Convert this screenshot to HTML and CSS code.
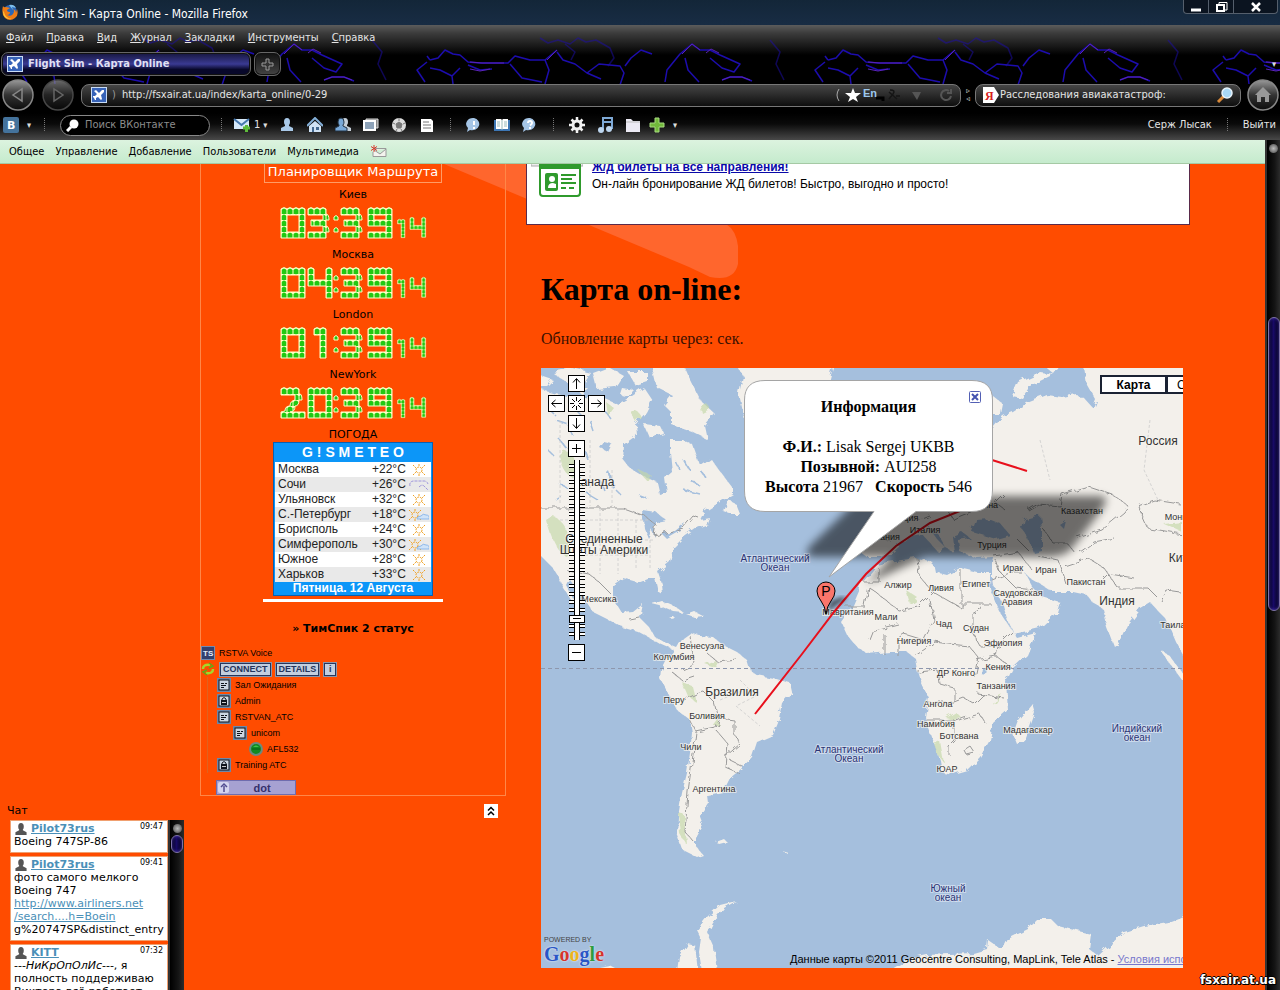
FILE: index.html
```html
<!DOCTYPE html>
<html lang="ru">
<head>
<meta charset="utf-8">
<title>Flight Sim - Карта Online - Mozilla Firefox</title>
<link rel="stylesheet" href="styles.css">
</head>
<body>
<svg class="defs" aria-hidden="true">
  <defs>
    <pattern id="brick" width="6" height="6" y="1" patternUnits="userSpaceOnUse">
      <rect width="6" height="6" fill="#ffffc4"/><path d="M.500 6V2q2.500-3 5 0V6z" fill="#22c812"/>
    </pattern>
    <g id="d0"><path d="M0 2q3-3 6 0q3-3 6 0q3-3 6 0q3-3 6 0V31H0zM6 8v17h12V8z"/></g>
    <g id="d1"><path d="M6 2q3-3 6 0q3-3 6 0V31h-6V8H6z"/></g>
    <g id="d2"><path d="M0 2q3-3 6 0q3-3 6 0q3-3 6 0V7q3-1 3 6h-3q0 6-4 6q0 6-5 6h15v6H0v-6l4-1q0-5 5-5q0-5 5-6V8H0z"/></g>
    <g id="d3"><path d="M0 2q3-3 6 0q3-3 6 0q3-3 6 0v5q3 0 3 6h-3v6q3 0 3 6h-3v6H0v-6h15v-6H3v-6h12V8H0z"/></g>
    <g id="d4"><path d="M0 2q3-3 6 0v11h12V2q3-3 6 0v29h-6V19H0z"/></g>
    <g id="d9"><path d="M0 2q3-3 6 0q3-3 6 0q3-3 6 0q3-3 6 0V31H0v-6h18v-6H0zM6 8v5h12V8z"/></g>
    <g id="colon"><path d="M1 13v-3q2-3 4 0v3zM1 25v-3q2-3 4 0v3z" fill="#22c812"/></g>
    <g id="mins"><use href="#colon" x="52"/><use href="#d3" x="60"/><use href="#d9" x="87"/><use href="#d1" transform="translate(113 12) scale(.6)"/><use href="#d4" transform="translate(129 10) scale(.65)"/></g>
    <pattern id="bolts" width="398" height="115" x="32" y="-25" patternUnits="userSpaceOnUse">
      <g fill="none" stroke="#1c0cae" stroke-width="1.500" stroke-linejoin="round">
        <path d="M0 60l8-2 7-8 8 4 7 1 8 7 12 1h28l7-7 15 4 15 0 12-10M38 65l12 5 12-1M0 68l10 2 12 6 1 8M30 68l-8 8M80 64l12 14 20 4M115 60l4 10-4 14M127 52l6 8 12 4 12 9 12-9 21 2 4 7-4 12M157 73l14 6M195 66l6-8 10-8 11 4M235 82l2-12 13-16 12-10 8 6 10 0 10 5 20 9-6 8-12-4-12-10M255 58l3 12 11 12M292 80l8-3 12 0 10 4M395 62l-10 8 8 12M398 60l-3-4"/>
        <path d="M110 38l8 5 10-3 12 4 8-6 8 4 10-2 14 8 4 10-6 8M135 44l10 8-4 8M340 40l10 12-4 12 8 16" opacity=".5"/>
      </g>
      <g fill="none" stroke="#5a22b8"><path d="M117 60l10-10M40 62l12 1h22M40 69l10 2 10-2M252 54l10-10 8 6M276 53l5-4 8 4M292 80l8-3 12 0 8 3"/></g>
    </pattern>
    <linearGradient id="silver" x2="0" y2="1"><stop stop-color="#999"/><stop offset=".5" stop-color="#333"/><stop offset="1" stop-color="#0c0c0c"/></linearGradient>
    <g id="sun" fill="none" stroke="#f0a020" stroke-dasharray="2 1"><circle cx="10" cy="7" r="3"/><path d="M4 2l3 3M16 2l-3 3M4 12l3-3M16 12l-3-3M10 1v2M10 11v2"/></g>
    <g id="suncloud"><use href="#sun" x="-4"/><path d="M8 11q0-3 4-3q2-3 5-1q4 0 3 4z" fill="#cfe3f8" stroke="#8db8ea"/></g>
    <g id="plane"><rect width="16" height="16" fill="#c9dcf5"/><rect x="1" y="1" width="14" height="14" fill="#3763b8"/><path d="M3 4l2-1 3 3 3-3h2v2l-3 3 1 4-1 1-3-3-2 1v2H4l-1-2-1-1v-1h2l2-2z" fill="#fff"/></g>
    <g id="room"><rect width="14" height="14" fill="#6d86a8"/><rect x="2" y="2" width="10" height="10" fill="#cdd6e2" stroke="#10141c"/><path d="M4 5.500h3M8 5.500h2M4 7.500h5M4 9.500h3" stroke="#10141c"/></g>
    <g id="lock"><rect width="14" height="14" fill="#6d86a8"/><rect x="2" y="2" width="10" height="10" fill="#cdd6e2" stroke="#10141c"/><path d="M5 6.500V5q2-3 4 0v1.500" fill="none" stroke="#10141c"/><rect x="4" y="6" width="6" height="5" fill="#10141c"/><path d="M5 8.500h4" stroke="#ccc"/></g>
    <g id="user"><path d="M4 5a3 4 0 1 1 6 0q0 2-1 3v1l4 2v3H1v-3l4-2V8q-1-1-1-3z"/></g>
  </defs>
</svg>

<div class="titlebar">
  <svg width="18" height="18" viewBox="0 0 18 18"><circle cx="9" cy="9" r="7" fill="#2a67b8"/><path d="M8 2q5-1 7 3l-4-1 1 3z" fill="#7ec0ee"/><path d="M2 3q1 2 3 1l4 1-3 2q0 2 3 2 0 3-3 3 4 2 6-1 2-3 0-5 3 1 3 4l1-4q2 6-2 9-5 4-10 0-4-4-2-12z" fill="#f07c14"/><path d="M3 9q1 6 8 7-9 1-9-8z" fill="#ffc83c"/></svg>
  <span class="title">Flight Sim - Карта Online - Mozilla Firefox</span>
  <div class="winbtns">
    <button aria-label="Свернуть"><svg width="12" height="12"><path d="M1 9h10" stroke="#fff" stroke-width="3"/></svg></button>
    <button aria-label="Развернуть"><svg width="13" height="12" fill="none" stroke="#fff"><path d="M4 3V1.500h8V9h-2"/><rect x="2" y="4" width="7" height="6" stroke-width="2"/></svg></button>
    <button class="wide" aria-label="Закрыть"><svg width="12" height="12"><path d="M2 2l8 8M10 2l-8 8" stroke="#fff" stroke-width="2.500"/></svg></button>
  </div>
</div>

<header class="chrome">
  <svg class="lightning" aria-hidden="true"><rect width="100%" height="60" fill="url(#bolts)"/></svg>
  <nav class="menu">
    <a href="#"><u>Ф</u>айл</a><a href="#"><u>П</u>равка</a><a href="#"><u>В</u>ид</a><a href="#"><u>Ж</u>урнал</a><a href="#"><u>З</u>акладки</a><a href="#"><u>И</u>нструменты</a><a href="#"><u>С</u>правка</a>
  </nav>
  <div class="tabs">
    <button class="tab"><svg width="16" height="16"><use href="#plane"/></svg>Flight Sim - Карта Online</button>
    <button class="newtab" aria-label="Новая вкладка"><svg width="13" height="13"><path d="M5 1h3v4h4v3H8v4H5V8H1V5h4z" fill="#333" stroke="#999"/></svg></button>
    <span class="grow"></span><span class="caret">▾</span>
  </div>
  <div class="navbar">
    <button class="round" aria-label="Назад"><svg width="34" height="34"><circle cx="17" cy="17" r="15" fill="url(#silver)" stroke="#888" stroke-width="1.500"/><path d="M21 11v12l-9-6z" fill="#333" stroke="#888" stroke-width="1.500"/></svg></button>
    <button class="round" aria-label="Вперёд"><svg width="34" height="34"><circle cx="17" cy="17" r="15" fill="url(#silver)" stroke="#666" stroke-width="1.500" opacity=".7"/><path d="M13 11v12l9-6z" fill="#222" stroke="#666" stroke-width="1.500"/></svg></button>
    <div class="field url">
      <svg width="16" height="16"><use href="#plane"/></svg><span class="sep">)</span>
      <input aria-label="Адрес" value="http://fsxair.at.ua/index/karta_online/0-29">
      <svg width="120" height="18" viewBox="0 0 120 18"><path d="M5 3q-4 6 0 12" stroke="#aaa" fill="none"/><path d="M19 2l2 5 6 0-5 4 2 5-5-3-5 3 2-5-5-4 6 0z" fill="#fff"/><path d="M42 12h7v3" stroke="#000" stroke-width="3" fill="none"/><text x="29" y="11" class="en">En</text><path d="M56 4q6 0 3 4l-4 5M55 6l8 7M62 10h4" stroke="#151515" stroke-width="1.500" fill="none"/><path d="M78 6h9l-4 8z" fill="#555"/><path d="M117 10a5 5 0 1 1-2-5M117 3v4h-4" stroke="#555" stroke-width="2" fill="none"/></svg>
    </div>
    <span class="split">▹<br>◃</span>
    <div class="field search">
      <svg width="18" height="18"><path d="M1 1h11l5 8-5 8H1z" fill="#fff"/><text x="3" y="14" class="ya">Я</text></svg>
      <input aria-label="Поиск" value="Расследования авиакатастроф:">
      <svg width="18" height="18"><path d="M2 16l6-6" stroke="#d98a3a" stroke-width="3"/><circle cx="11" cy="7" r="5" fill="#a9d8f5" stroke="#e8f4fc" stroke-width="1.500"/></svg>
    </div>
    <button class="round home" aria-label="Домой"><svg width="34" height="34"><circle cx="17" cy="17" r="15" fill="url(#silver)" stroke="#888" stroke-width="1.500"/><path d="M17 9l8 8h-2v7h-4v-5h-4v5h-4v-7H9z" fill="#999"/></svg></button>
  </div>
  <div class="bookmarks">
    <svg width="16" height="16"><rect width="16" height="16" rx="2" fill="#44739c"/><text x="4" y="12" class="vk">B</text></svg>
    <span class="caret">▾</span><i class="dots"></i>
    <label class="vksearch"><svg width="13" height="13"><path d="M1 12l4-4" stroke="#fff" stroke-width="3"/><circle cx="8" cy="5" r="4.500" fill="#fff"/></svg><input placeholder="Поиск ВКонтакте"></label>
    <i class="dots"></i>
    <span class="mail"><svg width="18" height="16"><path d="M1 2h15v10H1z" fill="#d5e9fa"/><path d="M1 2l7.500 6L16 2" stroke="#4577ad" stroke-width="2" fill="none"/><path d="M10 11h7M13.500 8v7" stroke="#5dbb3a" stroke-width="3"/></svg><b>1</b><span class="caret">▾</span></span>
    <span class="icons">
      <svg width="16" height="16" fill="#a9c9e8"><use href="#user" x="1"/></svg>
      <svg width="16" height="16"><path d="M2 9l6-5 6 5v6H2z" fill="#cfe2f5"/><path d="M0 9l8-8 8 8" stroke="#83afd8" stroke-width="2" fill="none"/><path d="M5 10h2v5H5zM9 10h3v3H9z" fill="#44688f"/></svg>
      <svg width="16" height="16"><g fill="#c6d0da"><use href="#user" x="3"/></g><g fill="#79a9d8" stroke="#234"><use href="#user" x="-1"/></g></svg>
      <svg width="16" height="16"><path d="M3 2h12v9H3z" fill="#888" stroke="#ddd"/><path d="M1 4h11v9H1z" fill="#8da2b8" stroke="#fff" stroke-width="2"/></svg>
      <svg width="16" height="16"><circle cx="8" cy="8" r="7" fill="#ddd"/><path d="M8 5l3 2-1 4H6L5 7zM8 1v3M2 6l2 1M14 6l-2 1M5 14l1-2M11 14l-1-2" fill="#777" stroke="#777"/></svg>
      <svg width="16" height="16"><path d="M2 2h10l2 2v11H2z" fill="#fff"/><path d="M4 5h6M4 8h8M4 11h8" stroke="#777"/></svg>
    </span>
    <i class="dots"></i>
    <span class="icons">
      <svg width="16" height="16"><path d="M8 1a7 6 0 1 1-4 12l-3 2 1-4A7 6 0 0 1 8 1z" fill="#a5c5e6"/><path d="M8 4v4M8 10v2" stroke="#fff" stroke-width="2"/></svg>
      <svg width="16" height="16"><path d="M0 3h16v11H0z" fill="#3d77b5"/><path d="M2 2h5l1 1 1-1h5v10H2z" fill="#fff"/><path d="M8 3v10M3 5h3M3 7h3M3 9h3M10 5h3M10 7h3M10 9h3" stroke="#9bb"/></svg>
      <svg width="16" height="16"><path d="M8 1a7 6 0 1 1-4 12l-3 2 1-4A7 6 0 0 1 8 1z" fill="#a5c5e6"/><path d="M6 6q0-2 2-2t2 2q0 1-2 2.500M8 10v2" stroke="#fff" stroke-width="2" fill="none"/></svg>
    </span>
    <i class="dots"></i>
    <span class="icons">
      <svg width="16" height="16"><circle cx="8" cy="8" r="4" fill="none" stroke="#f2f2f2" stroke-width="3"/><path d="M8 0v3M8 13v3M0 8h3M13 8h3M2.500 2.500l2 2M11.500 11.500l2 2M13.500 2.500l-2 2M2.500 13.500l2-2" stroke="#f2f2f2" stroke-width="2.500"/></svg>
      <svg width="16" height="16"><path d="M6 12V1h9v11M6 5h9" stroke="#7ea9d6" stroke-width="2" fill="none"/><circle cx="4" cy="13" r="3" fill="#bcd5ee"/><circle cx="12" cy="12" r="3" fill="#bcd5ee"/></svg>
      <svg width="16" height="16"><path d="M1 2h5l2 2h7v11H1z" fill="#eceaf4"/><path d="M1 5h14" stroke="#bbb"/></svg>
    </span>
    <svg class="plus" width="16" height="16"><path d="M6 1h4v5h5v4h-5v5H6v-5H1V6h5z" fill="#72b93c" stroke="#a8dc80"/></svg>
    <span class="caret">▾</span>
    <span class="grow"></span>
    <a href="#">Серж Лысак</a><i class="dots"></i><a href="#">Выйти</a>
  </div>
</header>

<div class="viewport">
  <div class="site">
    <nav class="admin">
      <a href="#">Общее</a><a href="#">Управление</a><a href="#">Добавление</a><a href="#">Пользователи</a><a href="#">Мультимедиа</a>
      <svg width="17" height="13"><path d="M4 3.500h12v8H3V7M4 5l6 4 6-5" fill="#f4f4ee" stroke="#999"/><path d="M4 0v7M1 1.500l6 4M7 1.500l-6 4" stroke="#d63a2c"/></svg>
    </nav>
    <div class="page">
      <svg class="swoosh" viewBox="0 0 300 116" width="300" height="116" aria-hidden="true"><path d="M0 0H95L282 60Q292 66 294 82V100Q290 118 266 113L245 103 0 0z" fill="#ff662d"/></svg>
      <aside>
        <section class="panel">
          <a class="planner" href="#">Планировщик Маршрута</a>
          <p class="city">Киев</p>
          <svg class="clock" width="145" height="36" role="img" aria-label="03:39:14"><use href="#d0"/><use href="#d3" x="27"/><use href="#mins"/></svg>
          <p class="city">Москва</p>
          <svg class="clock" width="145" height="36" role="img" aria-label="04:39:14"><use href="#d0"/><use href="#d4" x="27"/><use href="#mins"/></svg>
          <p class="city">London</p>
          <svg class="clock" width="145" height="36" role="img" aria-label="01:39:14"><use href="#d0"/><use href="#d1" x="27"/><use href="#mins"/></svg>
          <p class="city">NewYork</p>
          <svg class="clock" width="145" height="36" role="img" aria-label="20:39:14"><use href="#d2"/><use href="#d0" x="27"/><use href="#mins"/></svg>
          <p class="city">ПОГОДА</p>
          <div class="meteo">
            <h3>G ! S M E T E O</h3>
            <table>
              <tr><td>Москва</td><td>+22°C</td><td><svg width="20" height="14"><use href="#sun"/></svg></td></tr>
              <tr><td>Сочи</td><td>+26°C</td><td><svg width="20" height="14"><path d="M1 8q-1-4 3-5h11q3 0 4 3M10 9q3-3 5-1l4 4" fill="none" stroke="#9f96dc" stroke-dasharray="3 1"/></svg></td></tr>
              <tr><td>Ульяновск</td><td>+32°C</td><td><svg width="20" height="14"><use href="#sun"/></svg></td></tr>
              <tr><td>С.-Петербург</td><td>+18°C</td><td><svg width="20" height="14"><use href="#suncloud"/></svg></td></tr>
              <tr><td>Борисполь</td><td>+24°C</td><td><svg width="20" height="14"><use href="#sun"/></svg></td></tr>
              <tr><td>Симферополь</td><td>+30°C</td><td><svg width="20" height="14"><use href="#suncloud"/></svg></td></tr>
              <tr><td>Южное</td><td>+28°C</td><td><svg width="20" height="14"><use href="#sun"/></svg></td></tr>
              <tr><td>Харьков</td><td>+33°C</td><td><svg width="20" height="14"><use href="#sun"/></svg></td></tr>
            </table>
            <p>Пятница. 12 Августа</p>
          </div>
          <hr>
          <h4>» ТимСпик 2 статус</h4>
          <div class="ts">
            <div class="row"><svg width="14" height="14"><rect width="14" height="14" fill="#7189b0"/><rect x="1" y="1" width="12" height="12" fill="#34406c"/><text x="2" y="10" class="tstxt">TS</text></svg>RSTVA Voice</div>
            <div class="row btns"><svg width="14" height="14" fill="none" stroke="#a4d82a" stroke-width="2.500"><path d="M2 7q0-5 7-4M12 7q0 5-7 4"/><path d="M8 1l4 3-4 2M6 13l-4-3 4-2" stroke="#62a818" stroke-width="1.500"/></svg><button>CONNECT</button><button>DETAILS</button><button>i</button></div>
            <div class="tree">
              <div class="row"><svg width="14" height="14"><use href="#room"/></svg>Зал Ожидания</div>
              <div class="row"><svg width="14" height="14"><use href="#lock"/></svg>Admin</div>
              <div class="row"><svg width="14" height="14"><use href="#room"/></svg>RSTVAN_ATC</div>
              <div class="row in1"><svg width="14" height="14"><use href="#room"/></svg>unicom</div>
              <div class="row in2"><svg width="14" height="14"><circle cx="7" cy="7" r="6" fill="#118a22" stroke="#6a8a80" stroke-width="2"/><path d="M3 7h8" stroke="#0a5c14"/><path d="M4 5q3-3 6 0z" fill="#42c24c"/></svg>AFL532</div>
              <div class="row"><svg width="14" height="14"><use href="#lock"/></svg>Training ATC</div>
            </div>
            <button class="dot"><svg width="11" height="11"><rect width="11" height="11" rx="2" fill="#d4d4ee"/><path d="M6 10V4M3 5l3-3 3 3" fill="none" stroke="#514c90" stroke-width="1.500"/></svg><span>dot</span></button>
          </div>
        </section>
        <div class="chathead"><span>Чат</span><button aria-label="Наверх"><svg width="14" height="14" fill="none" stroke="#000" stroke-width="1.500"><path d="M4 6.500l3-3 3 3M4 11l3-3 3 3"/></svg></button></div>
        <div class="chat">
          <ul>
            <li><div class="who"><svg width="14" height="13" viewBox="0 0 14 14" fill="#555"><use href="#user"/></svg><a href="#">Pilot73rus</a><time>09:47</time></div>Boeing 747SP-86</li>
            <li><div class="who"><svg width="14" height="13" viewBox="0 0 14 14" fill="#555"><use href="#user"/></svg><a href="#">Pilot73rus</a><time>09:41</time></div>фото самого мелкого<br>Boeing 747<br><a href="#">http://www.airliners.net<br>/search....h=Boein</a><br>g%20747SP&amp;distinct_entry</li>
            <li><div class="who"><svg width="14" height="13" viewBox="0 0 14 14" fill="#555"><use href="#user"/></svg><a href="#">KITT</a><time>07:32</time></div>---<em>НиКрОпОлИс</em>---, я<br>полность поддерживаю<br>Виктора всё работает</li>
          </ul>
          <div class="bar small"><i class="knob"></i><i class="thumb"></i></div>
        </div>
      </aside>

      <main>
        <div class="ad">
          <svg width="52" height="38"><path d="M0 4h52v3H0z" fill="#eee" stroke="#aaa"/><path d="M9 5h40v29q0 3-3 3H12q-3 0-3-3z" fill="#fff" stroke="#2f9a2c" stroke-width="2"/><path d="M9 4h40v6H9z" fill="#2f9a2c"/><rect x="14" y="14" width="13" height="18" rx="2" fill="#2f9a2c"/><circle cx="21" cy="20" r="3" fill="#fff"/><path d="M17 29q0-5 5-5l3 1v4z" fill="#fff"/><path d="M30 16h15M30 20h11M30 24h15M30 29h5M38 29h5" stroke="#2f9a2c" stroke-width="2"/></svg>
          <div><a href="#">Ж/д билеты на все направления!</a><p>Он-лайн бронирование ЖД билетов! Быстро, выгодно и просто!</p></div>
        </div>
        <div class="content">
        <h1>Карта on-line:</h1>
        <p class="upd">Обновление карты через: сек.</p>
        <div class="map">
          <svg class="world" viewBox="541 368 642 600" preserveAspectRatio="xMinYMin slice">
            <defs><filter id="blur" x="-20%" y="-50%" width="140%" height="200%"><feGaussianBlur stdDeviation="4"/></filter>
            <filter id="soft"><feGaussianBlur stdDeviation="2"/></filter>
            <filter id="rough" x="0" y="0" width="100%" height="100%"><feTurbulence type="fractalNoise" baseFrequency=".12" numOctaves="3" seed="4"/><feDisplacementMap in="SourceGraphic" scale="7"/></filter></defs>
            <rect x="541" y="368" width="642" height="600" fill="#a5bfdd"/>
            <g fill="#f3f0eb" filter="url(#rough)">
              <path d="M535 388L556 394 578 398 600 396 618 404 632 396 644 388 652 400 646 412 636 424 637 435 623 445 622 458 630 468 647 478 657 482 660 495 667 493 665 478 672 472 670 452 670 440 683 440 693 445 700 465 710 458 723 475 733 488 733 494 720 502 704 512 700 520 710 518 708 524 697 528 683 538 673 548 670 562 658 572 662 584 663 595 658 592 655 578 647 578 637 582 623 578 613 585 613 598 622 613 633 612 643 604 640 618 650 628 655 637 665 643 677 648 683 638 690 633 700 636 713 637 723 645 737 652 747 660 750 670 757 675 773 678 790 683 792 692 782 703 778 723 773 735 757 742 752 757 740 770 730 778 723 792 707 795 708 803 700 815 703 823 695 837 695 845 703 855 697 857 683 850 677 833 678 817 682 793 687 773 690 753 692 733 690 720 677 710 670 697 661 680 662 670 668 658 674 650 660 644 650 638 637 631 620 626 607 619 593 612 582 596 570 580 567 586 577 604 573 602 563 588 558 576 553 568 541 556 535 550z"/>
              <path d="M552 372l20-4 18 4-8 12-16-2zM594 374l16-6 14 8-8 12-18 2zM628 372l20 0 0 10-12 4zM650 362h32l6 14 12 24 15 14-10 12 3 14-16-8-20-7 0-12-8-8 8-10-16-8zM644 424l16 2 4 8-14 4zM570 386l18 2-6 6zM541 376l12 4-6 6-8 0zM622 388l12 2-6 6-8-2zM735 360h100l-6 22-12 30-24 60-20-8-26-34-8-36 4-18z"/>
              <path d="M724 512l4-12 8 4 4 10-10 0zM652 604l10-3 14 6 8 6-10-1-14-6zM686 614l8-3 10 5-10 1zM668 616l6 0-2 2zM716 842l8-3 3 3-8 2zM782 851l7 2 0 2zM887 972l20-12 20-5 46-2 14-4 1-9 10 7 6 0 4-8 20-10 10-10 13 0 7 7 20 5 13 3-2 15 9 7 13-12 13-12 20-6 24-4 20-8v58zM736 901l-16 4-13 12-10 13 4 8-2 14 3 20h16l-3-22-8-18 5-10 12-14zM677 972l2-16 8-13 8 2 3 27zM600 968l10-2 8 4z"/>
              <path d="M863 582L877 565 887 562 917 558 933 562 935 572 947 575 960 568 977 572 990 572 990 588 1000 612 1013 632 1017 638 1036 633 1027 655 1013 668 1006 682 1008 710 993 723 990 740 980 757 967 770 953 774 942 772 940 760 933 740 925 717 928 697 920 680 917 670 915 658 907 652 890 652 867 654 858 648 847 635 841 622 853 605z"/>
              <path d="M1032 703l3 10-10 28-8 3-4-10 5-14zM1160 650l8 4 20 26-6 0z"/>
              <path d="M867 557L860 552 863 530 880 528 878 514 892 505 900 490 930 470 960 440 993 428 1003 416 1013 412 1027 403 1047 395 1062 397 1076 394 1084 398 1093 408 1096 400 1088 386 1084 362H1190V668L1176 642 1170 628 1165 618 1158 611 1150 602 1140 608 1127 625 1119 642 1114 646 1107 628 1102 608 1093 603 1087 595 1073 592 1053 592 1042 585 1030 578 1025 573 1033 588 1042 597 1060 602 1057 612 1040 628 1014 634 1008 622 1003 605 993 585 992 578 992 562 993 557 977 558 960 552 958 540 970 538 962 532 952 536 954 552 946 548 938 534 926 524 936 538 946 548 938 552 922 534 910 536 900 544 890 553 880 557zM868 508l10-18 8 4 4 14-12 4zM993 396l10 8-2 10-12 0zM1012 396l6-14 22-10 14 2-24 12-8 12zM1040 362l14 12 6-8z"/>
            </g>
            <g fill="#a5bfdd" filter="url(#rough)"><path d="M972 532l4-12 14-1 10 4 10 12-14 4zM1025 519l15-4 2 14 0 22-8 2-6-16-6-8zM642 510l14 2 10 8-10 2 0 16-4-8-4 8-4-10zM662 534l12-4 10-8-4 8-14 8zM982 668l5 0-1 7-5-1zM1060 525l6-4-2 8zM600 448l4-6 8 2-4 8zM608 474l4 14 3-2-5-14z"/>
            <path d="M570 430l3 6M556 420l12 4M590 420l4 12M584 450l3 9M600 480l4 10M560 440l6 8M606 412l6 8M576 410l8 8M588 494l10 6M560 484l6 3M690 480l10 6M700 470l6 8M684 460l6 10M684 490l16 4M550 410l6 6M594 404l4 6M548 450l6 6M616 490l6 6M640 496l8 3M676 462l4 8M556 500l6-4" stroke="#a5bfdd" stroke-width="1.500"/></g>
            <path d="M560 455q10-10 16 8 10 14-2 16-12-6-14-24zM546 520q12-10 22 14 4 20 0 24-16-10-22-38zM630 412q8-4 12 6l-6 4zM700 405q6-6 10 4l-8 4zM606 402l8 6-6 8zM636 468l16 8-4 6zM678 812l6 2 2 30-6-10zM705 664l10-4 2 8zM682 682l10 4 4 16-8-6zM934 744l6-3 4 22-6-8zM946 718l10-6 6 6-8 2zM906 590l12 8-8 6zM1002 694l-6 4-2 8zM1164 524l18-2v10zM712 726l6-8 1 8z" fill="#c5d9a8" opacity=".65" filter="url(#rough)"/>
            <g fill="none" stroke="#999" filter="url(#rough)">
              <path d="M541 508h82l22 8 12 10-2 10 14-4 14-4 10-12 6 2M567 570l22 4 10 8 10 10M630 620l10-2M690 636l2 14 4 14-14 6M672 672l10 8 12-4M684 700l12-6 8-2 10 10 4 16M690 720l6 12-4 30-4 30-3 40 9 10M696 732l20-4 4-10 14 2 0 14 6 10-14 12M716 730l12 14-2 24 14 6M708 654l10 8 20-2M730 760l12 6"/>
              <path d="M863 582h16v-14M844 606h20l4-20 30 24 20-4 14-14M917 558l2 18 14 16 28 16 0-38M961 604h30M1012 632l-14 14-18 0-8-14 0-18 10-6M930 600l4 20-10 20-20-6-6 4 0 18M870 640l4-10 24-6M884 654v-20M915 656l20-14 14 2 20 2 10 12-4 20M918 672l20-2 2 14 14 4 0 14-26 0M954 702l10-4 10 6 10-10M926 720l28 0 0 20-6 6 0 8M954 722l10-4 16-4 6 10M976 660l20-4 16 12M996 658l2-12M978 694l26 4M964 750l6-4 4 6-8 2z"/>
              <path d="M992 580l20-8 10 0M996 560l4 12 16 16 18 2M994 556l24-4 14 18M1018 540l10 10M1038 556l20 4 8 24M1028 510l10-6 22 2 2-12 26-8 24 8 16 12-4 6-22 18-24 8M1138 506l16-6 26 4M1138 506l10 22 34 6M1064 566l24-8 16 10 14 20 30 0 10 10M1102 582l8-8 24 4M1160 600l6-10 14 2M940 500l14 20 20-8M1005 510l-10-8 8-8M900 510l20 10 10-4M890 540l-20-6M1044 530l10 14 14 0 8 10M1080 552l14-10 20-4"/>
            </g>
            <g fill="none" stroke="#ccc" stroke-width=".8" stroke-dasharray="3 2"><path d="M560 520h90M565 540h90M570 555h80M580 508v60M600 508v66M618 508v66M636 520v50M650 540v30M740 680l16 16-20 10 24 20M560 420v84M590 440v66M612 470v36M720 700l24-10M1040 440l10 40M1150 420l-6 50 14 30"/></g>
            <path d="M541 668.500H1183" stroke="#8e97ad" stroke-dasharray="4 3"/>
            <g class="lbl" text-anchor="middle">
              <text x="599" y="602">Мексика</text><text x="702" y="649">Венесуэла</text><text x="674" y="660">Колумбия</text><text x="674" y="703">Перу</text><text x="707" y="719">Боливия</text><text x="691" y="750">Чили</text><text x="714" y="792">Аргентина</text>
              <text x="848" y="615">Мавритания</text><text x="886" y="620">Мали</text><text x="898" y="588">Алжир</text><text x="941" y="591">Ливия</text><text x="976" y="587">Египет</text><text x="944" y="627">Чад</text><text x="976" y="631">Судан</text><text x="914" y="644">Нигерия</text><text x="1003" y="646">Эфиопия</text><text x="998" y="670">Кения</text><text x="956" y="676">ДР Конго</text><text x="996" y="689">Танзания</text><text x="938" y="707">Ангола</text><text x="936" y="727">Намибия</text><text x="959" y="739">Ботсвана</text><text x="1028" y="733">Мадагаскар</text><text x="947" y="772">ЮАР</text>
              <text x="1018" y="596">Саудовская</text><text x="1017" y="605">Аравия</text><text x="1013" y="571">Ирак</text><text x="1046" y="573">Иран</text><text x="1086" y="585">Пакистан</text><text x="992" y="548">Турция</text><text x="925" y="533">Италия</text><text x="900" y="521">Франция</text><text x="882" y="540">Испания</text><text x="981" y="508">Украина</text><text x="1082" y="514">Казахстан</text><text x="1185" y="520">Монголия</text><text x="1178" y="628">Таиланд</text>
              <g class="big"><text x="594" y="486">Канада</text><text x="604" y="543">Соединенные</text><text x="604" y="554">Штаты Америки</text><text x="732" y="696">Бразилия</text><text x="1158" y="445">Россия</text><text x="1117" y="605">Индия</text><text x="1185" y="562">Китай</text></g>
              <g class="sea"><text x="775" y="562">Атлантический</text><text x="775" y="571">Океан</text><text x="849" y="753">Атлантический</text><text x="849" y="762">Океан</text><text x="1137" y="732">Индийский</text><text x="1137" y="741">океан</text><text x="948" y="892">Южный</text><text x="948" y="901">океан</text></g>
            </g>
            <path d="M755 714L802 654 834 612 866 574 896 546 930 523 965 509 980 470 960 450 992 460 1027 471" fill="none" stroke="#e8101c" stroke-width="2"/>
            <g fill="#000" opacity=".55"><path d="M862 496H1100Q1112 496 1100 512L1074 546Q1066 557 1050 557H925L866 584 892 557H815Q800 557 812 544z" filter="url(#blur)"/><path d="M827 612l20-14-6-1-10 4z" filter="url(#soft)"/></g>
            <path d="M765 380.500H972Q992.500 380.500 992.500 400V490Q992.500 511.500 972 511.500H916L829 577 874 511.500H765Q744.500 511.500 744.500 491V400Q744.500 380.500 765 380.500z" fill="#fff" stroke="#a5a5a5"/>
            <path d="M826 614q-1-8-5-13-4-5-4-10a9 9 0 0 1 18 0q0 5-4 10-4 5-5 13z" fill="#f9756b" stroke="#000"/><text x="826" y="596" text-anchor="middle" class="pin">P</text>
          </svg>
          <div class="controls">
            <div class="pan">
              <button class="n" aria-label="Вверх"><svg width="15" height="15"><path d="M7.500 13V3M4 6.500l3.500-4L11 6.500"/></svg></button>
              <button class="w" aria-label="Влево"><svg width="15" height="15"><path d="M13 7.500H3M6.500 4l-4 3.500 4 3.500"/></svg></button>
              <button aria-label="Центр"><svg width="15" height="15"><path d="M7.500 1v4M7.500 10v4M1 7.500h4M10 7.500h4M3 3l3 3M12 3L9 6M3 12l3-3M12 12L9 9"/></svg></button>
              <button aria-label="Вправо"><svg width="15" height="15"><path d="M2 7.500h10M8.500 4l4 3.500-4 3.500"/></svg></button>
              <button class="s" aria-label="Вниз"><svg width="15" height="15"><path d="M7.500 2v10M4 8.500l3.500 4 3.500-4"/></svg></button>
            </div>
            <button aria-label="Приблизить"><svg width="15" height="15"><path d="M3 7.500h9M7.500 3v9"/></svg></button>
            <input type="range" aria-label="Масштаб" min="0" max="100" value="90">
            <button aria-label="Отдалить"><svg width="15" height="15"><path d="M3 7.500h9"/></svg></button>
          </div>
          <div class="info">
            <button aria-label="Закрыть"><svg width="12" height="12"><rect x=".5" y=".5" width="11" height="11" rx="1" fill="#fff" stroke="#5360b4"/><path d="M3 3l6 6M9 3l-6 6" stroke="#4453b0" stroke-width="2"/></svg></button>
            <p><b>Информация</b></p><br>
            <p><b>Ф.И.:</b> Lisak Sergej UKBB</p>
            <p><b>Позывной:</b> AUI258</p>
            <p><b>Высота</b> 21967 &nbsp; <b>Скорость</b> 546</p>
          </div>
          <div class="types"><button class="on">Карта</button><button>Спутник</button></div>
          <div class="google"><small>POWERED BY</small><span><i class="b">G</i><i class="r">o</i><i class="y">o</i><i class="b">g</i><i class="g">l</i><i class="r">e</i></span></div>
          <p class="attr">Данные карты ©2011 Geocentre Consulting, MapLink, Tele Atlas - <a href="#">Условия использования</a></p>
        </div>
        </div>
      </main>
    </div>
  </div>
  <div class="bar"><i class="knob"></i><i class="thumb"></i></div>
</div>
<div class="mark">fsxair.at.ua</div>
</body>
</html>
```
FILE: styles.css
```css
* { box-sizing: border-box; margin: 0; padding: 0; }
body { display: flex; flex-direction: column; height: 100vh; overflow: hidden; background: #ff4c00; font: 11px/14px "DejaVu Sans Condensed", "DejaVu Sans", sans-serif; color: #000; }
button, input { font: inherit; color: inherit; border: 0; background: none; }
svg { display: block; flex: none; }
i { font-style: normal; }
ul { list-style: none; }
.defs { position: absolute; width: 0; height: 0; }
.grow { flex: 1; }
.caret { color: #ddd; font-size: 9px; }

.titlebar { display: flex; flex: none; height: 25px; padding: 2px 2px 0 1px; background: linear-gradient(#132638, #182c44); color: #fff; }
.title { flex: 1; padding: 5px 0 0 5px; font-size: 12px; }
.titlebar > svg { margin-top: 1px; }
.winbtns { display: flex; height: 14px; margin-top: -2px; border: 1px solid #555f6c; border-top: 0; border-radius: 0 0 4px 4px; background: #0b1420; }
.winbtns button { display: flex; align-items: center; justify-content: center; width: 25px; border-right: 1px solid #555f6c; }
.winbtns .wide { width: 43px; border: 0; }

.chrome { position: relative; flex: none; background: linear-gradient(#5c5c5c 0, #3c3c3c 8px, #000 30px); color: #e4e4e4; }
.lightning { position: absolute; top: 0; left: 0; width: 100%; height: 60px; filter: blur(.6px); }
.menu, .tabs, .navbar, .bookmarks { position: relative; display: flex; align-items: center; }
.chrome a, .admin a { color: inherit; text-decoration: none; }
.menu { height: 26px; gap: 13px; padding-left: 6px; }
.tabs { height: 26px; gap: 3px; padding: 0 4px 0 1px; }
.tab, .newtab { display: flex; align-items: center; gap: 5px; height: 24px; border: 1px solid #666; border-radius: 7px; box-shadow: inset 0 0 0 1px #111; }
.tab { width: 250px; padding-left: 5px; background: linear-gradient(#16163e, #3a3a92 50%, #08082a 75%); font-weight: bold; color: #e0e0f4; }
.newtab { width: 27px; justify-content: center; background: linear-gradient(#111, #444); }
.navbar { height: 36px; padding: 0 0 0 1px; }
.round { display: block; margin-right: 6px; }
.home { margin: 0 0 0 5px; }
.field { display: flex; align-items: center; height: 23px; padding: 0 6px 0 9px; border: 1px solid #777; border-radius: 8px; background: linear-gradient(#454545, #0e0e0e); }
.field input { flex: 1; min-width: 0; }
.url { flex: 1; min-width: 0; }
.url .sep { padding: 0 6px 0 5px; color: #999; }
.search { width: 266px; padding-left: 6px; }
.split { width: 14px; font-size: 8px; line-height: 8px; text-align: center; }
.en { font: bold 11px "Liberation Sans", sans-serif; fill: #9cc8ee; }
.ya { font: bold 12px "Liberation Serif", serif; fill: #d8201c; }
.vk { font: bold 11px "DejaVu Sans", sans-serif; fill: #fff; }
.bookmarks { height: 27px; padding: 0 4px 3px 3px; background: linear-gradient(#000, #0a0a0a 40%, #484848); }
.bookmarks > .caret { width: 20px; text-align: center; }
.dots { width: 1px; height: 14px; margin: 0 15px; background: repeating-linear-gradient(#777 0 1px, transparent 1px 2px); }
.bookmarks > .caret + .dots { margin-left: 5px; }
.vksearch { display: flex; align-items: center; gap: 6px; width: 150px; height: 21px; padding-left: 5px; border: 1px solid #888; border-radius: 11px; background: #000; }
.vksearch input { width: 110px; }
.vksearch input::placeholder { color: #8d8d8d; opacity: 1; }
.vksearch + .dots { margin: 0 11px; }
.mail { display: flex; align-items: center; gap: 3px; width: 46px; }
.mail b { font-weight: normal; }
.icons { display: flex; gap: 12px; }
.plus { margin-left: 8px; }

.viewport { display: flex; flex: 1; min-height: 0; }
.site { display: flex; flex: 1; flex-direction: column; min-width: 0; }
.admin { display: flex; flex: none; align-items: center; gap: 11px; height: 24px; padding-left: 9px; border-bottom: 1px solid #a5c9a4; background: linear-gradient(#dcf3df, #c5ebcd); }
.page { position: relative; display: flex; flex: 1; gap: 20px; min-height: 0; padding-right: 75px; overflow: hidden; }
.swoosh { position: absolute; left: 444px; top: 0; }
aside { position: relative; width: 506px; flex: none; font-family: "DejaVu Sans", sans-serif; font-size: 11px; line-height: 13px; }
.panel { display: flex; flex-direction: column; align-items: center; margin-left: 200px; border: 1px solid #ff8748; border-top: 0; }
.planner { padding: 0 3px 2px; border: 1px solid #ff9c66; border-top: 0; font-size: 13px; line-height: 16px; color: #fff; text-decoration: none; }
.city { margin-top: 5px; line-height: 14px; }
.clock { margin-top: 5px; fill: url(#brick); stroke: #ffffc4; stroke-width: 1px; overflow: visible; }
.meteo { width: 160px; padding: 0 1px; border: 1px solid #0b5fb0; background: #0c96f8; font-family: "Liberation Sans", sans-serif; }
.meteo h3 { font-size: 14px; line-height: 19px; text-align: center; color: #fff; }
.meteo table { width: 100%; border-collapse: collapse; background: #fff; color: #222; font-size: 12px; line-height: 15px; }
.meteo tr:nth-child(even) { background: #e9e9e9; }
.meteo td { height: 15px; padding-left: 3px; white-space: nowrap; }
.meteo td:nth-child(2) { text-align: right; }
.meteo p { font-size: 12px; line-height: 13px; font-weight: bold; text-align: center; color: #fff; }
hr { width: 180px; height: 3px; margin-top: 3px; border: 0; background: #fff; }
h4 { margin: 20px 0 9px; font-size: 11px; line-height: 14px; }
.ts { align-self: stretch; font: 9px/16px "Liberation Sans", sans-serif; }
.tstxt { font: bold 8px "Liberation Sans", sans-serif; fill: #e4ebf6; }
.row { display: flex; align-items: center; gap: 4px; height: 16px; }
.btns { gap: 5px; }
.row button { height: 13px; padding: 0 2px; border: 1px solid #26365c; outline: 1px solid #8a96ac; background: #c3cede; color: #24345c; font-weight: bold; font-size: 9px; line-height: 11px; }
.row button:last-child { width: 12px; }
.tree { margin-left: 6px; padding-left: 9px; border-left: 1px solid #e0621e; }
.in1 { padding-left: 16px; }
.in2 { padding-left: 32px; }
.dot { display: flex; align-items: center; width: 80px; height: 15px; margin: 7px 0 0 15px; padding-left: 1px; border: 1px solid #6f6cae; background: #a6a1d2; color: #35306c; font: bold 11px/12px "Liberation Sans", sans-serif; }
.dot span { flex: 1; padding-right: 0; text-align: center; }
.chathead { display: flex; justify-content: space-between; height: 24px; padding: 8px 8px 0 7px; }
.chathead button { width: 14px; height: 14px; background: #fff; }
.chat { display: flex; width: 184px; height: 180px; padding-left: 10px; }
.chat ul { flex: 1; min-width: 0; }
.chat li { margin-bottom: 3px; padding: 1px 0 4px 3px; border: 1px solid #f0a070; background: #fff; white-space: nowrap; }
.chat a { color: #4a90b8; }
.who { display: flex; gap: 3px; padding-right: 4px; }
.who a { flex: 1; font-weight: bold; }
.who time { font-size: 8px; line-height: 10px; }
.bar { position: relative; display: flex; flex: none; flex-direction: column; align-items: center; width: 15px; border-left: 2px solid #333; background: linear-gradient(90deg, #000, #151515 60%, #2c2c2c); }
.knob { width: 9px; height: 9px; margin-top: 4px; border-radius: 50%; background: radial-gradient(#bbb, #444); }
.thumb { width: 12px; height: 294px; margin-top: 164px; border: 1px solid #7d72a8; border-radius: 6px; background: linear-gradient(90deg, #05051c, #180a66 45%, #04041a); box-shadow: inset 0 0 3px #4b32b4; }
.small .thumb { height: 18px; margin-top: 2px; }
.small { width: 16px; }

main { position: relative; flex: 1; min-width: 0; }
.ad { display: flex; gap: 9px; height: 67px; margin-top: -6px; padding-left: 4px; border: 1px solid #5a2a4a; background: #fff; font: 12px/17px "Liberation Sans", sans-serif; }
.ad a { color: #0a0aa8; font-weight: bold; }
.ad > div { white-space: nowrap; }
.content { padding: 46px 7px 0 15px; font-family: "Liberation Serif", serif; }
h1 { font-size: 32px; line-height: 36px; }
.upd { margin: 22px 0 19px; font-size: 16px; line-height: 20px; color: #3a1000; }
.map { position: relative; height: 600px; overflow: hidden; background: #a5bfdd; font-family: "Liberation Sans", sans-serif; }
.world { width: 100%; height: 100%; }
.lbl { font: 9px "Liberation Sans", sans-serif; fill: #333; stroke: #f6f4ef; stroke-width: 2px; stroke-opacity: .7; paint-order: stroke; }
.lbl .big { font-size: 12px; }
.lbl .sea { font-size: 10px; fill: #2b3474; stroke: #dde6f3; }
.pin { font: 14px "Liberation Sans", sans-serif; }
.controls { position: absolute; left: 7px; top: 7px; display: flex; flex-direction: column; align-items: center; }
.controls svg { fill: none; stroke: #000; }
.controls button { width: 17px; height: 17px; border: 1px solid #000; background: #fff; }
.pan { display: grid; grid-template-columns: repeat(3, 17px); gap: 3px; margin-bottom: 8px; }
.n, .s { grid-column: 2; }
.w { grid-column: 1; }
.controls input { appearance: none; writing-mode: vertical-lr; width: 16px; height: 180px; margin: 3px 0 4px; background: linear-gradient(90deg, #000 1px, #fff 1px 5px, #000 5px) center / 6px 100% no-repeat, repeating-linear-gradient(transparent 0 4px, #000 4px 5px, #fff 5px 7px, #000 7px 8px); }
.controls input::-webkit-slider-thumb { appearance: none; width: 16px; height: 8px; border: 1px solid #000; background: linear-gradient(90deg, transparent 3px, #000 3px 11px, transparent 11px) center / 100% 1px no-repeat, #fff; }
.info { position: absolute; left: 204px; top: 12px; width: 247px; padding-top: 17px; font: 16px/20px "Liberation Serif", serif; text-align: center; }
.info button { position: absolute; right: 11px; top: 11px; }
.types { position: absolute; left: 559px; top: 7px; display: flex; }
.types button { width: 67px; height: 19px; margin-right: -1px; border: 2px solid #1a2233; background: #fff; font-size: 12px; }
.types .on { font-weight: bold; }
.google { position: absolute; left: 3px; bottom: 3px; font-size: 7px; line-height: 8px; color: #444; }
.google small { display: block; font-size: 7px; }
.google span { display: block; font: bold 20px/21px "Liberation Serif", serif; text-shadow: 0 0 2px #fff; }
.b { color: #2a56c6; } .r { color: #d5342b; } .y { color: #ecb31c; } .g { color: #2f9c3c; }
.attr { position: absolute; left: 249px; bottom: 2px; font-size: 11px; line-height: 14px; white-space: nowrap; }
.attr a { color: #7777cc; }
.mark { position: absolute; right: 4px; bottom: 3px; font: bold 12px/14px "DejaVu Sans", sans-serif; color: #fff; text-shadow: 1px 0 #000, -1px 0 #000, 0 1px #000, 0 -1px #000, 1px 1px #000; }
```
